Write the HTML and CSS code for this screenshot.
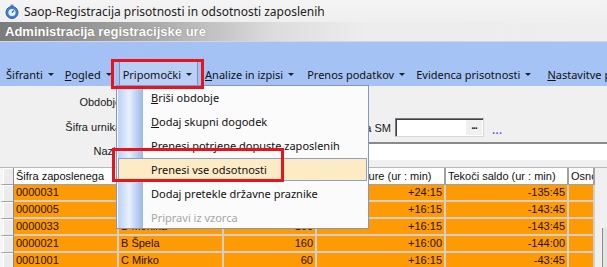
FILE: index.html
```html
<!DOCTYPE html>
<html>
<head>
<meta charset="utf-8">
<link rel="stylesheet" href="styles.css">
</head>
<body>
<div class="app">
  <div class="titlebar">
    <svg class="ticon" width="14" height="15" viewBox="0 0 14 15">
      <rect x="5.5" y="0.5" width="3" height="2" fill="#7a8fb0"/>
      <circle cx="7" cy="8.5" r="6" fill="#3d7fd6" stroke="#2a5ea8" stroke-width="1"/>
      <circle cx="7" cy="8.5" r="3.6" fill="#e8f1fc"/>
      <path d="M7 8.5 L9 6.5" stroke="#2a5ea8" stroke-width="1.2"/>
    </svg>
    <span class="ttext">Saop-Registracija prisotnosti in odsotnosti zaposlenih</span>
  </div>
  <div class="appheader">Administracija registracijske ure</div>
  <div class="menubar">
    <div class="mi">Šifranti<i class="caret"></i></div>
    <div class="mi"><u>P</u>ogled<i class="caret"></i></div>
    <div class="mi pressed">Pripomočki<i class="caret"></i></div>
    <div class="msep"></div>
    <div class="mi"><u>A</u>nalize in izpisi<i class="caret"></i></div>
    <div class="msep"></div>
    <div class="mi">Prenos podatkov<i class="caret"></i></div>
    <div class="mi wide">Evidenca prisotnosti<i class="caret"></i></div>
    <div class="mi"><u>N</u>astavitve p</div>
  </div>
  <div class="form">
    <div class="labels">
      <div class="lbl">Obdobje</div>
      <div class="lbl">Šifra urnika</div>
      <div class="lbl">Naziv</div>
    </div>
    <div class="rightpart">
      <div class="smrow">
        <span class="smlbl">Šifra SM</span>
        <div class="input"><span class="ibtn">...</span></div>
        <span class="dots">...</span>
      </div>
      <div class="panel"></div>
    </div>
  </div>
  <div class="gridtop"></div>
  <div class="gridwrap">
    <div class="grid">
      <div class="rh hdr"></div>
      <div class="hc">Šifra zaposlenega</div>
      <div class="hc"></div>
      <div class="hc"></div>
      <div class="hc">Presežne ure (ur : min)</div>
      <div class="hc">Tekoči saldo (ur : min)</div>
      <div class="hc">Osnova</div>

      <div class="rh"></div>
      <div class="c">0000031</div>
      <div class="c"></div>
      <div class="c r"></div>
      <div class="c r">+24:15</div>
      <div class="c r">-135:45</div>
      <div class="c"></div>

      <div class="rh"></div>
      <div class="c">0000005</div>
      <div class="c"></div>
      <div class="c r"></div>
      <div class="c r">+16:15</div>
      <div class="c r">-143:45</div>
      <div class="c"></div>

      <div class="rh"></div>
      <div class="c">0000033</div>
      <div class="c">B Monika</div>
      <div class="c r">160</div>
      <div class="c r">+16:15</div>
      <div class="c r">-143:45</div>
      <div class="c"></div>

      <div class="rh"></div>
      <div class="c">0000021</div>
      <div class="c">B Špela</div>
      <div class="c r">160</div>
      <div class="c r">+16:00</div>
      <div class="c r">-144:00</div>
      <div class="c"></div>

      <div class="rh"></div>
      <div class="c">0001001</div>
      <div class="c">C Mirko</div>
      <div class="c r">60</div>
      <div class="c r">+16:15</div>
      <div class="c r">-43:45</div>
      <div class="c"></div>
    </div>
    <div class="vscroll"><div class="thumb"></div></div>
  </div>
</div>

<div class="dropdown">
  <div class="strip"></div>
  <div class="ditem"><u>B</u>riši obdobje</div>
  <div class="ditem"><u>D</u>odaj skupni dogodek</div>
  <div class="ditem">Prenesi potrjene dopuste zaposlenih</div>
  <div class="ditem hot">Prenesi vse odsotnosti</div>
  <div class="ditem">Dodaj pretekle državne praznike</div>
  <div class="ditem dis">Pripravi iz vzorca</div>
</div>
<div class="redbox rb1"></div>
<div class="redbox rb2"></div>
</body>
</html>
```

FILE: styles.css
```css
* { box-sizing: border-box; }
html, body { margin: 0; padding: 0; }
body {
  width: 607px;
  height: 267px;
  overflow: hidden;
  position: relative;
  background: #f0f0f0;
  font-family: "Noto Sans", "Open Sans", sans-serif;
  font-size: 11px;
  color: #1a1a1a;
}
.app { width: 607px; }

.titlebar {
  height: 22px;
  display: flex;
  align-items: center;
  padding-left: 5px;
  background: linear-gradient(#f4f4f4, #efefef);
  font-size: 12px;
  color: #222;
}
.ticon { margin-right: 5px; }

.appheader {
  height: 20px;
  line-height: 20px;
  padding-left: 5px;
  font-family: "Liberation Sans", Arial, sans-serif;
  font-weight: bold;
  font-size: 13px;
  color: #fff;
  text-shadow: 0 0 1px #666;
  background: linear-gradient(to right, #7b7b7b 0, #a9a9a9 25%, #dcdcdc 45%, #ededed 60%, #eeeeee 100%);
  border-bottom: 1px solid #d6d6d6;
}

.menubar {
  height: 44px;
  background: linear-gradient(to right, #a3c1f4, #a6c3f5);
  display: flex;
  align-items: flex-end;
  padding-left: 2px;
  white-space: nowrap;
  overflow: hidden;
}
.mi {
  height: 25px;
  display: flex;
  align-items: center;
  padding: 0 3px;
  margin-right: 3px;
  border: 1px solid transparent;
  border-bottom: none;
  color: #111;
  font-size: 11px;
}
.mi.wide { margin-right: 8px; }
.mi u { text-decoration: underline; }
.mi.pressed {
  background: #b9cff6;
  border-color: #7f93c2;
  position: relative;
  z-index: 2;
  padding-right: 5px;
  margin-right: 1px;
}
.caret {
  display: inline-block;
  width: 0; height: 0;
  border-left: 3px solid transparent;
  border-right: 3px solid transparent;
  border-top: 3px solid #222;
  margin-left: 5px;
  margin-top: 1px;
}
.msep {
  width: 1px;
  height: 17px;
  margin: 0 2px 4px 0;
  background: #6f86b8;
}

.form {
  height: 74px;
  display: flex;
  font-family: "Liberation Sans", Arial, sans-serif;
  font-size: 11px;
}
.labels { width: 121px; padding-top: 4px; flex: none; }
.lbl { height: 24.5px; line-height: 24px; text-align: right; white-space: nowrap; }
.rightpart {
  margin-left: 179px;
  flex: 1;
  display: flex;
  flex-direction: column;
  padding-top: 32px;
}
.smrow { height: 19px; display: flex; align-items: center; }
.smlbl { width: 91px; text-align: right; }
.input {
  width: 89px;
  height: 19px;
  margin-left: 4px;
  background: #fff;
  border: 1px solid #7a7a7a;
  border-right-color: #d8d8d8;
  border-bottom-color: #d8d8d8;
  box-shadow: inset 1px 1px 0 #404040;
  display: flex;
  justify-content: flex-end;
  padding: 1px;
}
.ibtn {
  width: 16px;
  background: #f0f0f0;
  font-weight: bold;
  font-size: 10px;
  line-height: 12px;
  text-align: center;
  letter-spacing: -1px;
}
.dots {
  margin-left: 8px;
  color: #4d5cf0;
  font-weight: bold;
  letter-spacing: 0.5px;
  padding-top: 4px;
}
.panel {
  margin-top: 5px;
  height: 18px;
  background: #fff;
  border-top: 2px solid #8a8a8a;
}

.gridtop {
  height: 8px;
  background: #f0f0f0;
  border-bottom: 1px solid #b8b8b8;
}
.gridwrap { display: flex; height: 99px; }
.grid {
  width: 595px;
  display: grid;
  grid-template-columns: 14px 105px 105px 93px 129px 123px 26px;
  grid-auto-rows: 17px;
  font-family: "Liberation Sans", Arial, sans-serif;
  font-size: 11px;
  background: #fff;
}
.rh {
  background: #ececec;
  border-left: 3px solid #f6f6f6;
  border-right: 1px solid #8c8c8c;
  border-bottom: 1px solid #a0a0a0;
  box-shadow: inset 1px 1px 0 #fff;
}
.hc {
  background: #fff;
  border-right: 2px solid #a2a2a2;
  border-bottom: 1px solid #a2a2a2;
  padding-left: 2px;
  line-height: 16px;
  white-space: nowrap;
  overflow: hidden;
  color: #111;
}
.c {
  background: #fe9a03;
  border-right: 2px solid #d2cfca;
  border-bottom: 2px solid #d2cfca;
  padding: 0 2px;
  line-height: 15px;
  white-space: nowrap;
  overflow: hidden;
  color: #241400;
}
.c.r { text-align: right; }
.vscroll {
  width: 12px;
  background: #f0f0f0;
  padding-top: 60px;
  padding-left: 7px;
}
.thumb {
  height: 40px;
  border-left: 1px solid #8a8a8a;
  background: #e4e4e4;
}

.dropdown {
  position: absolute;
  left: 116px;
  top: 85px;
  width: 253px;
  height: 144px;
  background: #fbfbfb;
  border: 1px solid #8496c6;
  padding: 0 1px;
  z-index: 5;
}
.strip {
  position: absolute;
  left: 1px;
  top: 0;
  bottom: 0;
  width: 25px;
  background: linear-gradient(to right, #bcd1f5, #e8f0fc 45%, #b5cbf1 80%, #9db8e6);
}
.ditem {
  position: relative;
  height: 24px;
  line-height: 23px;
  padding-left: 33px;
  color: #111;
  white-space: nowrap;
}
.ditem.hot {
  background: #fdebc6;
  border: 1px solid #8d9fcc;
  height: 23px;
  margin-bottom: 1px;
  line-height: 21px;
  padding-left: 32px;
}
.ditem.dis { color: #a6a6a6; }

.redbox {
  position: absolute;
  border: 3px solid #e7141e;
  z-index: 6;
}
.rb1 { left: 111px; top: 59px; width: 93px; height: 30px; }
.rb2 { left: 112px; top: 148px; width: 172px; height: 34px; }
```
